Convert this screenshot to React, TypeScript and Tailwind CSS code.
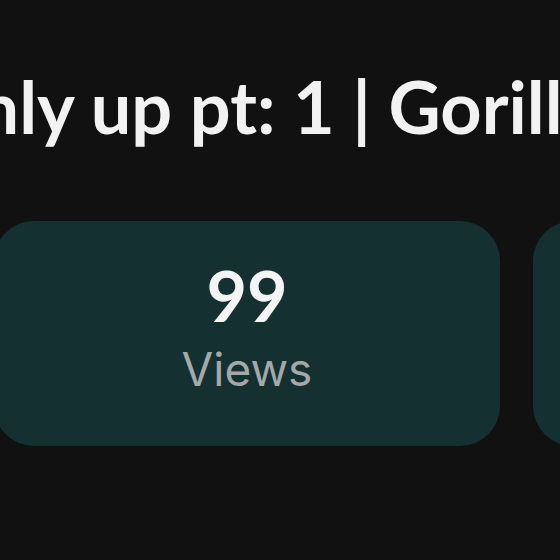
import React from 'react';

const stats = [
  { value: '99', label: 'Views' },
  { value: '12', label: 'Likes' },
];

const App: React.FC = () => {
  return (
    <div className="w-[560px] h-[560px] overflow-hidden bg-[#111111]">
      <div className="pt-[70px] ml-[-79px] whitespace-nowrap">
        <h1 className="text-[72px] leading-none font-bold text-[#f2f2f2] font-['Lato',sans-serif]">
          Only up pt: 1 | Gorilla Tag
        </h1>
      </div>

      <div className="mt-[79px] ml-[-6px] flex gap-[33px]">
        {stats.map(stat => (
          <div
            key={stat.label}
            className="w-[506px] h-[225px] shrink-0 rounded-[40px] bg-[#143030] flex flex-col items-center pt-[39px]"
          >
            <span className="text-[70px] leading-none font-bold text-[#f4f4f4] font-['Lato',sans-serif]">
              {stat.value}
            </span>
            <span className="mt-[16px] text-[46px] leading-none text-[#a3a9aa] font-['Inter',sans-serif]">
              {stat.label}
            </span>
          </div>
        ))}
      </div>
    </div>
  );
};

export default App;
